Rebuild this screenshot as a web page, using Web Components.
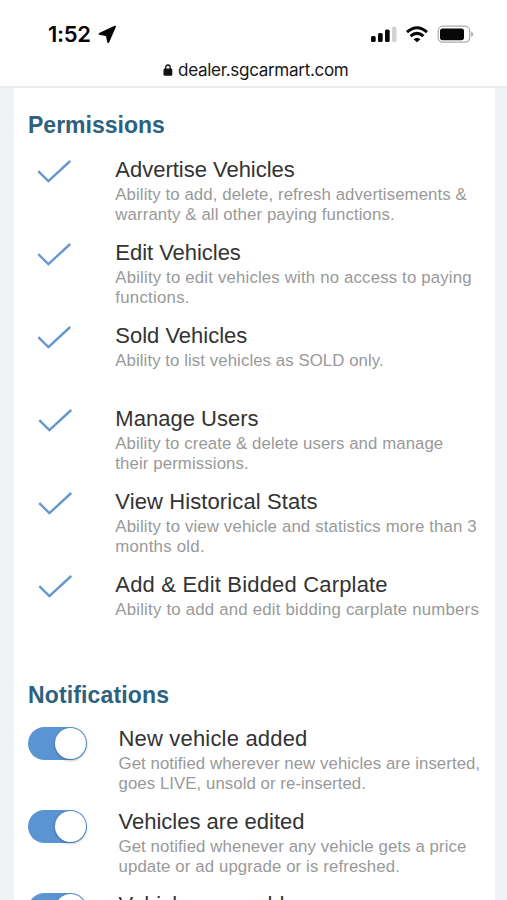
<!DOCTYPE html>
<html lang="en"><head><meta charset="utf-8"><title>Dealer permissions</title>
<style>
html,body{margin:0;height:900px;overflow:hidden;background:#fff;font-family:"Liberation Sans",Arial,sans-serif}
</style></head><body>
<dealer-page>
<status-bar slot="chrome"></status-bar>
<url-bar slot="chrome">dealer.sgcarmart.com</url-bar>
<settings-group heading="Permissions">
<permission-row><text-line w="179.5">Advertise Vehicles</text-line><text-line slot="d" w="351.5">Ability to add, delete, refresh advertisements &amp;</text-line><text-line slot="d" w="279.5">warranty &amp; all other paying functions.</text-line></permission-row>
<permission-row><text-line w="125.5">Edit Vehicles</text-line><text-line slot="d" w="356.5">Ability to edit vehicles with no access to paying</text-line><text-line slot="d" w="74.5">functions.</text-line></permission-row>
<permission-row><text-line w="132">Sold Vehicles</text-line><text-line slot="d" w="268.5">Ability to list vehicles as SOLD only.</text-line></permission-row>
<permission-row style="--check-x:9.7px"><text-line w="143.3">Manage Users</text-line><text-line slot="d" w="328">Ability to create &amp; delete users and manage</text-line><text-line slot="d" w="133.5">their permissions.</text-line></permission-row>
<permission-row style="--check-x:9.7px"><text-line w="202.3">View Historical Stats</text-line><text-line slot="d" w="361.5">Ability to view vehicle and statistics more than 3</text-line><text-line slot="d" w="89.5">months old.</text-line></permission-row>
<permission-row style="--check-x:9.7px"><text-line w="272.5">Add &amp; Edit Bidded Carplate</text-line><text-line slot="d" w="363.7">Ability to add and edit bidding carplate numbers</text-line></permission-row>
</settings-group>
<settings-group heading="Notifications" style="--heading-spacing:.14px">
<notification-row><text-line w="189">New vehicle added</text-line><text-line slot="d" w="361.7">Get notified wherever new vehicles are inserted,</text-line><text-line slot="d" w="247.5">goes LIVE, unsold or re-inserted.</text-line></notification-row>
<notification-row><text-line w="186">Vehicles are edited</text-line><text-line slot="d" w="348">Get notified whenever any vehicle gets a price</text-line><text-line slot="d" w="281.5">update or ad upgrade or is refreshed.</text-line></notification-row>
<notification-row><text-line w="166">Vehicles are sold</text-line></notification-row>
</settings-group>
</dealer-page>
<script>
const define=(name,html,setup)=>customElements.define(name,class extends HTMLElement{
  constructor(){super();this.attachShadow({mode:'open'}).innerHTML=html;}
  connectedCallback(){if(setup)setup(this);}
});
define('status-bar',`<style>
:host{display:flex;height:58px;box-sizing:border-box;padding:12px 33px 0 48px;justify-content:space-between;color:#050505}
.time{display:flex;font:600 22px/44px Inter,sans-serif;letter-spacing:-.3px}
.time svg{margin:13px 0 0 7.5px}.signals{display:block;margin-top:11px}
</style><div class="time">1:52<svg width="19" height="19" viewBox="0 0 19 19"><path d="M17 1.7 10.2 17 8.8 10.2 1.6 8.9Z" fill="#050505" stroke="#050505" stroke-width="1.9" stroke-linejoin="round"/></svg></div>
<svg class="signals" width="104" height="22" viewBox="370 23 104 22"><g fill="#080808"><rect x="371" y="36" width="4.7" height="6" rx="1.5"/><rect x="378" y="33" width="4.7" height="9" rx="1.5"/><rect x="385" y="29.5" width="4.7" height="12.5" rx="1.5"/></g><rect x="392" y="26.5" width="4.5" height="15.5" rx="1.5" fill="#d2d2d2"/>
<g fill="none" stroke="#080808" stroke-width="3.1"><path d="M407 32.1Q417 23.4 427 32.1M410.6 36.2Q417 30.4 423.4 36.2"/></g><path d="M413.5 39.3Q417 36.1 420.5 39.3L417 42.2Z" fill="#080808"/>
<rect x="438.2" y="26.2" width="31.5" height="16" rx="4.7" fill="none" stroke="#aaa" stroke-width="1.2"/><rect x="440" y="28.4" width="24" height="11.8" rx="2.6" fill="#080808"/><path d="M471.2 31.5q2 1 2 2.8t-2 2.8z" fill="#aaa"/></svg>`);
define('url-bar',`<style>:host{display:flex;height:30px;box-sizing:border-box;border-bottom:2px solid #e9edef;padding-left:163px;font:400 17.1px/24px Inter,sans-serif;letter-spacing:-.33px;color:#171717}svg{margin:6px 5px 0 0;flex:none}</style><svg width="10" height="12" viewBox="0 0 10 12"><rect x=".5" y="4.6" width="8.8" height="7.2" rx="1.3" fill="#111"/><path d="M2.6 6V3.6a2.3 2.6 0 0 1 4.6 0V6" fill="none" stroke="#111" stroke-width="1.3"/></svg><slot></slot>`);
define('dealer-page',`<style>:host{display:block;height:900px;overflow:hidden;background:#eff3f6}header{background:#fff}main{background:#fff;height:812px;overflow:hidden;margin:0 12px 0 14px}</style><header><slot name="chrome"></slot></header><main><slot></slot></main>`);
define('settings-group',`<style>:host{display:block;padding:21px 0 0 14px;height:549px}h2{margin:0 0 16px;font:bold 23px/32px "Liberation Sans",sans-serif;color:#2c617f;letter-spacing:var(--heading-spacing,0)}.rows{display:grid;grid-auto-rows:83px}</style><h2></h2><div class="rows"><slot></slot></div>`,el=>{el.shadowRoot.querySelector('h2').textContent=el.getAttribute('heading')});
const rowStyle=`.copy{color:#333;font-size:22px;line-height:26px}.desc{color:#999;font-size:16.8px;line-height:19.5px;margin-top:2px}`;
define('permission-row',`<style>:host{display:grid;grid-template-columns:87.3px 1fr}svg{margin:2.4px 0 0 var(--check-x,9px)}${rowStyle}</style><svg width="36" height="26" viewBox="0 0 36 26"><path d="M1.3 12.2 11.4 22.2 33.2 2" fill="none" stroke="#6598cc" stroke-width="2.4"/></svg><div class="copy"><slot></slot><div class="desc"><slot name="d"></slot></div></div>`);
define('notification-row',`<style>:host{display:grid;grid-template-columns:90.5px 1fr}.toggle{box-sizing:border-box;width:59px;height:33px;border-radius:17px;background:#5b94d3;padding:1px;display:flex;justify-content:flex-end}.toggle i{width:31px;height:31px;border-radius:50%;background:#fff;box-shadow:0 1px 3px #24466b99}${rowStyle}.copy{margin-top:-1px}</style><div class="toggle"><i></i></div><div class="copy"><slot></slot><div class="desc"><slot name="d"></slot></div></div>`);
// Registered last so each line measures itself in its row's font size.
define('text-line',`<style>:host{display:block;white-space:nowrap}span{display:inline-block}</style><span><slot></slot></span>`,el=>{
  const s=el.shadowRoot.querySelector('span');
  const w=s.getBoundingClientRect().width,n=el.textContent.length;
  s.style.letterSpacing=((Number(el.getAttribute('w'))-w)/n)+'px';
});
</script></body></html>
